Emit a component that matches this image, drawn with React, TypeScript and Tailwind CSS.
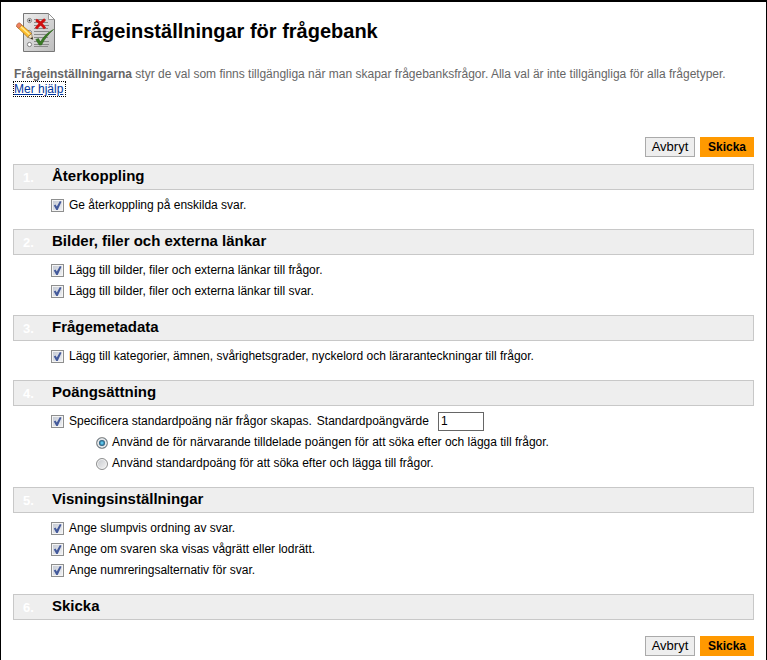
import { useState, type ReactNode } from 'react';

interface CheckProps {
  label: string;
}

interface SectionProps {
  number: number;
  title: string;
  children?: ReactNode;
}

function PageIcon() {
  return (
    <svg className="w-10 h-10 shrink-0" viewBox="0 0 40 40" aria-hidden="true">
      <defs>
        <linearGradient id="paper" x1="0" y1="0" x2="1" y2="1">
          <stop offset="0" stopColor="#ececec" />
          <stop offset="1" stopColor="#bdbdbd" />
        </linearGradient>
      </defs>
      <path d="M7.5.5h25l6 6v32h-31z" fill="url(#paper)" stroke="#777" />
      <path d="M32.500.5v6h6z" fill="#fafafa" stroke="#888" strokeWidth=".8" />
      <path
        d="M18 6.500h12M18 9.500h14M18 12.500h15M18 15.500h14M18 18.500h15M18 21.500h15M18 24.500h14M18 28.500h15M18 31.500h15M18 33.500h14"
        stroke="#8a8a8a"
      />
      <g fill="#fff" stroke="#777" strokeWidth=".9">
        <circle cx="13.500" cy="7.500" r="2.100" />
        <circle cx="13.500" cy="19.500" r="2.100" />
        <circle cx="13.500" cy="31.500" r="2.100" />
      </g>
      <circle cx="13.500" cy="7.500" r="1" fill="#222" />
      <path d="M20 7c3 1.500 6 4.500 9 8.500M29 6.500c-3 2-6.500 5.500-9 9" stroke="#d01010" strokeWidth="2.800" fill="none" />
      <path d="M19.800 26.500l2.700-1 1.800 3.500c3-5 7-9.500 13.200-12.500-5.500 5-9 9.500-12 15.500h-2.300z" fill="#397a25" stroke="#2d641c" strokeWidth=".6" />
      {/* Pencil */}
      <path d="M3.500 10l12 10.500-3.800 3.700L.6 13.500z" fill="#ffbe2e" stroke="#a66c13" strokeWidth=".7" />
      <path d="M3.500 12.500l10 9" stroke="#ffec94" strokeWidth="1.400" />
      <path d="M3.500 10l2.300 2-3 3.500-2.200-2C0 12 2 9.500 3.500 10z" fill="#ef8360" stroke="#a8603e" strokeWidth=".6" />
      <path d="M15.500 20.500l1.200 5.800-5-2.100z" fill="#f5e3bd" stroke="#866b43" strokeWidth=".7" />
      <path d="M16.800 26.500l-2.300-1 1.900-1.500z" fill="#222" />
    </svg>
  );
}

function CheckBox({ label }: CheckProps) {
  const [checked, setChecked] = useState(true);

  return (
    <label className="flex items-center gap-[5px]">
      <span className="relative w-[13px] h-[13px] shrink-0">
        <input
          type="checkbox"
          checked={checked}
          onChange={(e) => setChecked(e.target.checked)}
          className="block appearance-none w-[13px] h-[13px] border border-[#8e8f8f] bg-linear-to-br from-[#c3c8d2] to-[#f2f3f5] shadow-[inset_0_0_0_1px_#f4f4f4]"
        />
        {checked && (
          <svg className="absolute inset-0 pointer-events-none" viewBox="0 0 13 13" aria-hidden="true">
            <path d="M2.800 6.500l1.700-.9 1.300 1.900L8.900 2.100l1.600.6L6.700 11H5.300z" fill="#445a9b" />
          </svg>
        )}
      </span>
      {label}
    </label>
  );
}

function Section({ number, title, children }: SectionProps) {
  return (
    <section>
      <div className="flex h-[26px] border border-[#c8c8c8] bg-[#eee] pl-[9px]">
        <span className="w-[29px] text-[13px] font-bold leading-[25px] text-white">{number}.</span>
        <h2 className="text-[15px] font-bold leading-[21px]">{title}</h2>
      </div>
      {children && <div className="pt-[5px] pb-[13px] pl-[38px] leading-[21px]">{children}</div>}
    </section>
  );
}

function Actions() {
  return (
    <div className="flex justify-end gap-[5px]">
      <button type="button" className="h-5 w-[50px] border border-[#aaa] bg-[#eee] text-[13px] leading-[18px]">
        Avbryt
      </button>
      <button type="submit" className="h-5 w-[54px] bg-[#f90] font-bold leading-5">
        Skicka
      </button>
    </div>
  );
}

const scoreOptions = [
  { value: 'current', label: 'Använd de för närvarande tilldelade poängen för att söka efter och lägga till frågor.' },
  { value: 'default', label: 'Använd standardpoäng för att söka efter och lägga till frågor.' },
];

export default function App() {
  const [score, setScore] = useState('current');
  const [points, setPoints] = useState('1');

  return (
    <main className="min-h-screen border-x border-t-2 border-black bg-white px-3 pt-[11px] pb-1 font-['Liberation_Sans',Arial,sans-serif] text-xs text-black">
      <header>
        <div className="flex items-start gap-[15px] pl-[3px]">
          <PageIcon />
          <h1 className="text-xl font-bold leading-9">Frågeinställningar för frågebank</h1>
        </div>
        <p className="mt-[14px] pl-px leading-[15px] text-[#666]">
          <strong>Frågeinställningarna</strong> styr de val som finns tillgängliga när man skapar frågebanksfrågor. Alla
          val är inte tillgängliga för alla frågetyper.
          <br />
          <a href="#help" className="pr-0.5 text-[#003399] underline outline-1 outline-dotted outline-black">
            Mer hjälp
          </a>
        </p>
      </header>

      <form className="mt-10" onSubmit={(e) => e.preventDefault()}>
        <Actions />
        <div className="mt-[7px] mb-4">
          <Section number={1} title="Återkoppling">
            <CheckBox label="Ge återkoppling på enskilda svar." />
          </Section>

          <Section number={2} title="Bilder, filer och externa länkar">
            <CheckBox label="Lägg till bilder, filer och externa länkar till frågor." />
            <CheckBox label="Lägg till bilder, filer och externa länkar till svar." />
          </Section>

          <Section number={3} title="Frågemetadata">
            <CheckBox label="Lägg till kategorier, ämnen, svårighetsgrader, nyckelord och läraranteckningar till frågor." />
          </Section>

          <Section number={4} title="Poängsättning">
            <div className="flex items-center gap-[5px]">
              <CheckBox label="Specificera standardpoäng när frågor skapas." />
              <label htmlFor="points" className="pr-1">
                Standardpoängvärde
              </label>
              <input
                id="points"
                type="text"
                value={points}
                onChange={(e) => setPoints(e.target.value)}
                className="h-[19px] w-[46px] border border-[#666] px-0.5"
              />
            </div>
            {scoreOptions.map((option) => (
              <label key={option.value} className="flex items-center gap-1 pl-[45px]">
                <input
                  type="radio"
                  name="score"
                  value={option.value}
                  checked={score === option.value}
                  onChange={() => setScore(option.value)}
                  className="w-3 h-3 appearance-none rounded-full border border-[#8e8f8f] bg-linear-to-br from-[#c5c8cc] to-[#f5f5f5] shadow-[inset_0_0_0_1px_#f4f4f4] checked:bg-radial checked:from-[#5cc4ea] checked:from-10% checked:via-[#113958] checked:via-50% checked:to-[#113958] checked:shadow-[inset_0_0_0_2px_#e4e6e8]"
                />
                {option.label}
              </label>
            ))}
          </Section>

          <Section number={5} title="Visningsinställningar">
            <CheckBox label="Ange slumpvis ordning av svar." />
            <CheckBox label="Ange om svaren ska visas vågrätt eller lodrätt." />
            <CheckBox label="Ange numreringsalternativ för svar." />
          </Section>

          <Section number={6} title="Skicka" />
        </div>
        <Actions />
      </form>
    </main>
  );
}
